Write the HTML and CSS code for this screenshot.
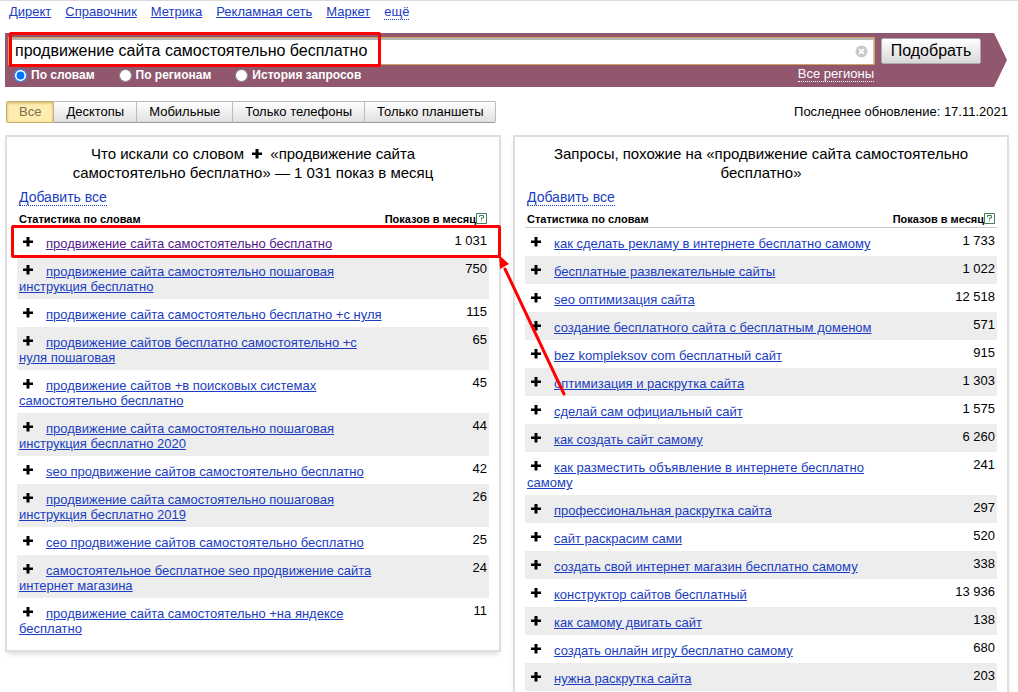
FILE: index.html
```html
<!DOCTYPE html>
<html lang="ru">
<head>
<meta charset="utf-8">
<meta name="viewport" content="width=device-width, initial-scale=1">
<title>Подбор слов</title>
<link rel="stylesheet" href="styles.css">
</head>
<body>
<svg class="defs" aria-hidden="true">
  <symbol id="plus" viewBox="0 0 10 10"><path d="M3.500 0h3v3.500H10v2.500H6.500V9.500H3.500V6H0V3.500h3.500z"/></symbol>
  <symbol id="help" viewBox="0 0 11 11"><path d="M.5.5h10v10H.5zM3.500 4V2.500h4v2.500h-2v1.500M5.500 7.500v1" fill="#fff" stroke="#3f7f55"/></symbol>
</svg>
<nav class="services">
  <a href="#">Директ</a>
  <a href="#">Справочник</a>
  <a href="#">Метрика</a>
  <a href="#">Рекламная сеть</a>
  <a href="#">Маркет</a>
  <a href="#" class="dotted">ещё</a>
</nav>
<form class="search">
  <div class="search-main">
    <div class="field">
      <input class="query" type="text" aria-label="Запрос" value="продвижение сайта самостоятельно бесплатно">
      <button class="clear" type="button" aria-label="Очистить"><svg viewBox="0 0 14 14"><circle cx="7" cy="7" r="6.500" fill="#c9c9c9"/><path d="M4.500 4.500l5 5m0-5l-5 5" stroke="#fff" stroke-width="2"/></svg></button>
    </div>
    <div class="modes">
      <label><input type="radio" name="mode" checked>По словам</label>
      <label><input type="radio" name="mode">По регионам</label>
      <label><input type="radio" name="mode">История запросов</label>
      <a href="#" class="regions">Все регионы</a>
    </div>
    <div class="mark mark-query"></div>
  </div>
  <button class="submit" type="submit">Подобрать</button>
</form>
<div class="toolbar">
  <div class="tabs">
    <button class="tab active" type="button">Все</button>
    <button class="tab" type="button">Десктопы</button>
    <button class="tab" type="button">Мобильные</button>
    <button class="tab" type="button">Только телефоны</button>
    <button class="tab" type="button">Только планшеты</button>
  </div>
  <div class="updated">Последнее обновление: 17.11.2021</div>
</div>
<main class="columns">
  <section class="panel">
    <h2 class="title">Что искали со словом <svg class="plus title-plus"><use href="#plus"/></svg> «продвижение сайта самостоятельно бесплатно» — 1 031 показ в месяц</h2>
    <a href="#" class="add-all dotted">Добавить все</a>
    <table class="stats">
      <colgroup><col><col class="col-spare"><col class="col-count"></colgroup>
      <thead><tr><th>Статистика по словам</th><th class="count" colspan="2">Показов в месяц<svg class="help"><use href="#help"/></svg></th></tr></thead>
      <tbody>
        <tr><td colspan="2"><svg class="plus"><use href="#plus"/></svg><a href="#" class="visited">продвижение сайта самостоятельно бесплатно</a></td><td class="count">1 031</td></tr>
        <tr><td colspan="2"><svg class="plus"><use href="#plus"/></svg><a href="#">продвижение сайта самостоятельно пошаговая инструкция бесплатно</a></td><td class="count">750</td></tr>
        <tr><td colspan="2"><svg class="plus"><use href="#plus"/></svg><a href="#">продвижение сайта самостоятельно бесплатно +с нуля</a></td><td class="count">115</td></tr>
        <tr><td colspan="2"><svg class="plus"><use href="#plus"/></svg><a href="#">продвижение сайтов бесплатно самостоятельно +с нуля пошаговая</a></td><td class="count">65</td></tr>
        <tr><td colspan="2"><svg class="plus"><use href="#plus"/></svg><a href="#">продвижение сайтов +в поисковых системах самостоятельно бесплатно</a></td><td class="count">45</td></tr>
        <tr><td colspan="2"><svg class="plus"><use href="#plus"/></svg><a href="#">продвижение сайта самостоятельно пошаговая инструкция бесплатно 2020</a></td><td class="count">44</td></tr>
        <tr><td colspan="2"><svg class="plus"><use href="#plus"/></svg><a href="#">seo продвижение сайтов самостоятельно бесплатно</a></td><td class="count">42</td></tr>
        <tr><td colspan="2"><svg class="plus"><use href="#plus"/></svg><a href="#">продвижение сайта самостоятельно пошаговая инструкция бесплатно 2019</a></td><td class="count">26</td></tr>
        <tr><td colspan="2"><svg class="plus"><use href="#plus"/></svg><a href="#">сео продвижение сайтов самостоятельно бесплатно</a></td><td class="count">25</td></tr>
        <tr><td colspan="2"><svg class="plus"><use href="#plus"/></svg><a href="#">самостоятельное бесплатное seo продвижение сайта интернет магазина</a></td><td class="count">24</td></tr>
        <tr><td colspan="2"><svg class="plus"><use href="#plus"/></svg><a href="#">продвижение сайта самостоятельно +на яндексе бесплатно</a></td><td class="count">11</td></tr>
      </tbody>
    </table>
    <div class="mark mark-row"></div>
    <svg class="arrow" viewBox="0 0 70 144"><path d="M65 139L6 14" stroke="#f00" stroke-width="3" stroke-linecap="round"/><path d="M0 0l10 9-9 5z" fill="#f00"/></svg>
  </section>
  <section class="panel">
    <h2 class="title">Запросы, похожие на «продвижение сайта самостоятельно бесплатно»</h2>
    <a href="#" class="add-all dotted">Добавить все</a>
    <table class="stats">
      <colgroup><col><col class="col-spare"><col class="col-count"></colgroup>
      <thead><tr><th>Статистика по словам</th><th class="count" colspan="2">Показов в месяц<svg class="help"><use href="#help"/></svg></th></tr></thead>
      <tbody>
        <tr><td colspan="2"><svg class="plus"><use href="#plus"/></svg><a href="#">как сделать рекламу в интернете бесплатно самому</a></td><td class="count">1 733</td></tr>
        <tr><td colspan="2"><svg class="plus"><use href="#plus"/></svg><a href="#">бесплатные развлекательные сайты</a></td><td class="count">1 022</td></tr>
        <tr><td colspan="2"><svg class="plus"><use href="#plus"/></svg><a href="#">seo оптимизация сайта</a></td><td class="count">12 518</td></tr>
        <tr><td colspan="2"><svg class="plus"><use href="#plus"/></svg><a href="#">создание бесплатного сайта с бесплатным доменом</a></td><td class="count">571</td></tr>
        <tr><td colspan="2"><svg class="plus"><use href="#plus"/></svg><a href="#">bez kompleksov com бесплатный сайт</a></td><td class="count">915</td></tr>
        <tr><td colspan="2"><svg class="plus"><use href="#plus"/></svg><a href="#">оптимизация и раскрутка сайта</a></td><td class="count">1 303</td></tr>
        <tr><td colspan="2"><svg class="plus"><use href="#plus"/></svg><a href="#">сделай сам официальный сайт</a></td><td class="count">1 575</td></tr>
        <tr><td colspan="2"><svg class="plus"><use href="#plus"/></svg><a href="#">как создать сайт самому</a></td><td class="count">6 260</td></tr>
        <tr><td colspan="2"><svg class="plus"><use href="#plus"/></svg><a href="#">как разместить объявление в интернете бесплатно самому</a></td><td class="count">241</td></tr>
        <tr><td colspan="2"><svg class="plus"><use href="#plus"/></svg><a href="#">профессиональная раскрутка сайта</a></td><td class="count">297</td></tr>
        <tr><td colspan="2"><svg class="plus"><use href="#plus"/></svg><a href="#">сайт раскрасим сами</a></td><td class="count">520</td></tr>
        <tr><td colspan="2"><svg class="plus"><use href="#plus"/></svg><a href="#">создать свой интернет магазин бесплатно самому</a></td><td class="count">338</td></tr>
        <tr><td colspan="2"><svg class="plus"><use href="#plus"/></svg><a href="#">конструктор сайтов бесплатный</a></td><td class="count">13 936</td></tr>
        <tr><td colspan="2"><svg class="plus"><use href="#plus"/></svg><a href="#">как самому двигать сайт</a></td><td class="count">138</td></tr>
        <tr><td colspan="2"><svg class="plus"><use href="#plus"/></svg><a href="#">создать онлайн игру бесплатно самому</a></td><td class="count">680</td></tr>
        <tr><td colspan="2"><svg class="plus"><use href="#plus"/></svg><a href="#">нужна раскрутка сайта</a></td><td class="count">203</td></tr>
      </tbody>
    </table>
  </section>
</main>
</body>
</html>
```
FILE: styles.css
```css
* { box-sizing: border-box; }
body {
  margin: 0;
  border-top: 1px solid #dcdcdc;
  background: #fff;
  color: #000;
  font: 13px/15px "Liberation Sans", Arial, sans-serif;
}
button, input { font-family: inherit; }
a { color: #1a3dc1; }
a.visited { color: #551a8b; }
.dotted { text-decoration: none; border-bottom: 1px dotted #1a3dc1; }
.defs { position: absolute; width: 0; height: 0; }

.services { display: flex; gap: 14px; padding: 3px 9px 0; height: 32px; align-items: flex-start; }

.search {
  display: flex;
  align-items: flex-start;
  gap: 6px;
  margin: 0 11px 0 5px;
  padding: 4px 26px 3px 3px;
  background: #90576f;
  clip-path: polygon(0 -2px, calc(100% - 13px) -2px, calc(100% - 13px) 0, 100% 50%, calc(100% - 13px) 100%, 0 100%);
}
.search-main { flex: 1; position: relative; }
.field {
  display: flex;
  align-items: center;
  height: 28px;
  padding: 0 6px;
  background: #fff;
  border: 1px solid #cda05c;
  box-shadow: inset 0 2px 0 #b5b5b5, inset 1px 0 0 #ccc, inset -1px 0 0 #ccc;
}
.query { flex: 1; min-width: 0; border: 0; padding: 0; background: none; font-size: 16px; outline: 0; }
.clear { border: 0; padding: 0; background: none; width: 13px; height: 13px; }
.clear svg { display: block; width: 13px; height: 13px; }
.modes { display: flex; gap: 24px; padding: 1px 1px 0 6px; color: #fff; font-size: 12px; font-weight: bold; line-height: 15px; height: 19px; }
.modes label { display: flex; align-items: center; gap: 4px; }
.modes input { margin: 0; width: 13px; height: 13px; }
.regions { margin-left: auto; color: #fff; font-size: 13px; font-weight: normal; text-decoration: none; border-bottom: 1px dotted #fff; height: 16px; line-height: 16px; }
.submit {
  width: 100px;
  height: 26px;
  margin-top: 1px;
  padding: 0;
  border: 1px solid #aaa;
  border-radius: 2px;
  background: linear-gradient(#fff, #d8d8d8);
  font-size: 16px;
  color: #000;
}

.toolbar { display: flex; justify-content: space-between; align-items: flex-start; padding: 14px 10px 0 6px; }
.tabs { display: flex; }
.tab {
  height: 22px;
  margin: 0;
  padding: 0 12px;
  border: 1px solid #bbb;
  border-bottom-color: #999;
  border-left-width: 0;
  background: linear-gradient(#fff, #e0e0e0);
  font-size: 13px;
  line-height: 20px;
  color: #000;
}
.tab.active { border: 1px solid #c9b16b; border-radius: 2px 0 0 2px; background: #ffedb0; box-shadow: inset 0 1px 3px #c9b16b; color: #776f55; }
.tab:last-child { border-radius: 0 2px 2px 0; }
.updated { padding-top: 3px; }

.columns { display: grid; grid-template-columns: 1fr 1fr; gap: 12px; align-items: start; padding: 12px 9px 20px 5px; }
.panel { position: relative; border: 2px solid #dedede; padding: 7px 10px 9px; box-shadow: 0 4px 6px -3px #ccc; }
.title { margin: 0 0 8px; padding: 0 20px; font-size: 15px; line-height: 19px; font-weight: normal; text-align: center; }
.plus { width: 10px; height: 10px; }
.title-plus { margin: 0 4px; }
.add-all { display: inline-block; margin-left: 2px; font-size: 14px; line-height: 15px; }
.stats { width: 100%; table-layout: fixed; border-collapse: collapse; }
.col-spare { width: 20px; }
.col-count { width: 102px; }
.stats th { padding: 6px 2px 0; height: 21px; border-bottom: 1px solid #ccc; font-size: 11px; line-height: 15px; text-align: left; vertical-align: top; }
.stats td { padding: 8px 2px 5px; vertical-align: top; }
.stats td .plus { margin: 0 13px 0 4px; vertical-align: 1px; }
.stats tbody tr:nth-child(even) { background: #ededed; }
.stats .count { text-align: right; white-space: nowrap; }
.stats td.count { padding-top: 5px; }
.help { width: 11px; height: 11px; vertical-align: -1px; }

.mark { position: absolute; border: 3px solid #f00; border-radius: 2px; pointer-events: none; }
.mark-query { left: 1px; top: -5px; width: 372px; height: 35px; }
.mark-row { left: 4px; right: -2px; top: 88px; height: 33px; }
.arrow { position: absolute; left: 492px; top: 118px; width: 70px; height: 144px; z-index: 1; pointer-events: none; fill: none; }
```
